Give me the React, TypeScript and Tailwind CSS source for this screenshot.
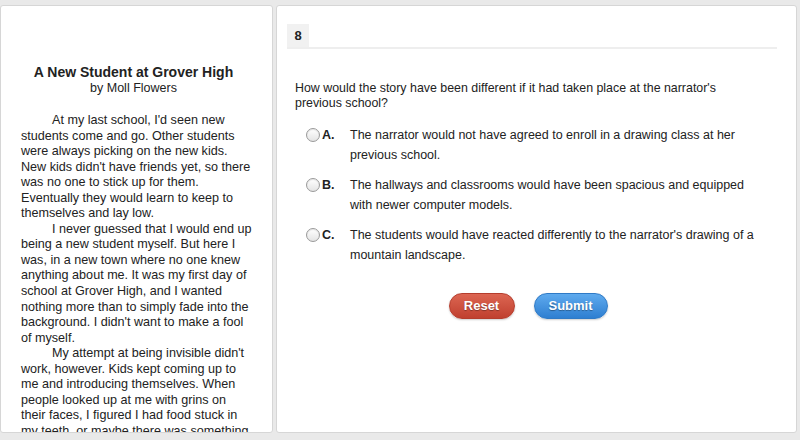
import React from 'react';

const options = [
  { key: 'A.', text: 'The narrator would not have agreed to enroll in a drawing class at her previous school.' },
  { key: 'B.', text: 'The hallways and classrooms would have been spacious and equipped with newer computer models.' },
  { key: 'C.', text: "The students would have reacted differently to the narrator's drawing of a mountain landscape." },
];

const App: React.FC = () => {
  return (
    <div
      className="h-[440px] w-[800px] overflow-hidden bg-[#e9e9e9] pt-[5px] pb-[7px] pr-[3px] flex gap-[3px] text-[#222]"
      style={{ fontFamily: '"Liberation Sans", Arial, sans-serif' }}
    >
      {/* passage */}
      <div className="w-[273px] shrink-0 h-full overflow-hidden bg-white border border-[#d6d6d6] rounded-[3px] pl-[20px] pr-[19px] pt-[58px]">
        <h1 className="text-center text-[14px] leading-[16px] font-bold pr-[7px]">A New Student at Grover High</h1>
        <p className="text-center text-[12.5px] leading-[16px] pr-[7px]">by Moll Flowers</p>
        <div className="mt-[17px] text-[12.6px] leading-[15.55px]">
          <p className="indent-[31px]">
            At my last school, I'd seen new students come and go. Other students were always picking on the new kids.
            New kids didn't have friends yet, so there was no one to stick up for them. Eventually they would learn to
            keep to themselves and lay low.
          </p>
          <p className="indent-[31px]">
            I never guessed that I would end up being a new student myself. But here I was, in a new town where no one
            knew anything about me. It was my first day of school at Grover High, and I wanted nothing more than to
            simply fade into the background. I didn't want to make a fool of myself.
          </p>
          <p className="indent-[31px]">
            My attempt at being invisible didn't work, however. Kids kept coming up to me and introducing themselves.
            When people looked up at me with grins on their faces, I figured I had food stuck in my teeth, or maybe
            there was something on my shirt.
          </p>
        </div>
      </div>

      {/* question */}
      <div className="flex-1 h-full bg-white border border-[#d6d6d6] rounded-[3px] pl-[10px] pr-[19px] pt-[18px]">
        <div className="border-b-2 border-[#eeeeee] flex">
          <div className="w-[22px] h-[23px] bg-[#f1f1f1] flex items-center justify-center text-[13px] font-bold">8</div>
        </div>
        <div className="pl-[8px]">
          <p className="mt-[32px] w-[468px] text-[12.4px] leading-[15px]">
            How would the story have been different if it had taken place at the narrator's previous school?
          </p>
          <div className="mt-[14px] flex flex-col gap-[10px]">
            {options.map((o) => (
              <div key={o.key} className="flex text-[12.5px] leading-[20px]">
                <div className="w-[55px] shrink-0 flex items-start pl-[11px]">
                  <span className="mt-[3px] w-[14px] h-[14px] rounded-full border border-[#9a9a9a] bg-gradient-to-b from-white to-[#e4e4e4] shadow-[inset_0_1px_1px_rgba(0,0,0,0.1)]" />
                  <span className="ml-[2px] font-bold">{o.key}</span>
                </div>
                <p className="w-[415px]">{o.text}</p>
              </div>
            ))}
          </div>
          <div className="mt-[28px] flex justify-center gap-[19px] pr-[16px]">
            <button className="w-[66px] h-[26px] rounded-full bg-gradient-to-b from-[#dc6552] to-[#c0402f] border border-[#b53d2d] text-white text-[13px] font-bold [text-shadow:0_1px_1px_rgba(0,0,0,0.35)] shadow-[0_1px_2px_rgba(0,0,0,0.2)]">
              Reset
            </button>
            <button className="w-[74px] h-[26px] rounded-full bg-gradient-to-b from-[#5eaaee] to-[#2e7fd1] border border-[#2f7ac6] text-white text-[13px] font-bold [text-shadow:0_1px_1px_rgba(0,0,0,0.35)] shadow-[0_1px_2px_rgba(0,0,0,0.2)]">
              Submit
            </button>
          </div>
        </div>
      </div>
    </div>
  );
};

export default App;
